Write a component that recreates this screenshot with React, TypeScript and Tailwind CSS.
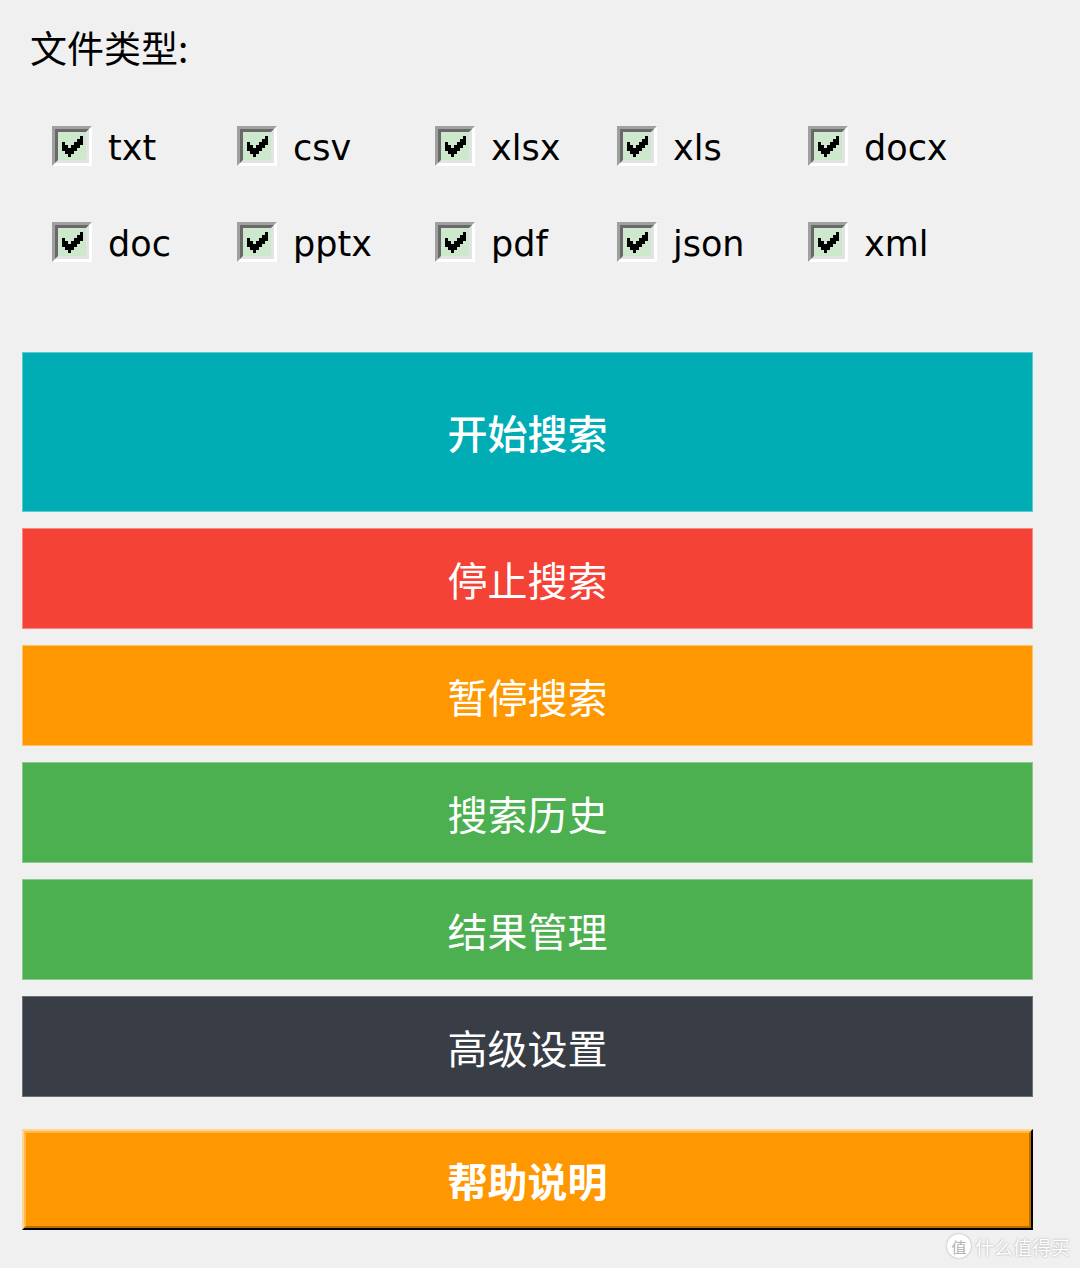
import type { ReactNode } from 'react';

const exts = [
  ['txt', 'csv', 'xlsx', 'xls', 'docx'],
  ['doc', 'pptx', 'pdf', 'json', 'xml'],
];

const cjk = "font-['Noto_Sans_CJK_SC',sans-serif]";

// 7x7 classic tick, scaled up to the box
function Tick() {
  return (
    <svg width="21" height="21" viewBox="0 0 7 7" shapeRendering="crispEdges">
      <path
        fill="#000"
        d="M6 0h1v1H6zM5 1h2v1H5zM0 2h1v1H0zM4 2h3v1H4zM0 3h2v1H0zM3 3h3v1H3zM0 4h5v1H0zM1 5h3v1H1zM2 6h1v1H2z"
      />
    </svg>
  );
}

function CheckItem({ label }: { label: string }) {
  return (
    <label className="flex items-center gap-[16px] h-[40px]">
      <span className="w-[40px] h-[40px] shrink-0 border-[3px] border-t-[#a0a0a0] border-l-[#a0a0a0] border-b-white border-r-white">
        <span className="w-full h-full flex items-center justify-center bg-[#cde8cd] border-[3px] border-t-[#696969] border-l-[#696969] border-b-[#e3e3e3] border-r-[#e3e3e3]">
          <Tick />
        </span>
      </span>
      <span className="font-['DejaVu_Sans',sans-serif] text-[35px] leading-none text-black pt-[5px]">
        {label}
      </span>
    </label>
  );
}

function FlatButton({
  children,
  className,
}: {
  children: ReactNode;
  className: string;
}) {
  return (
    <button
      type="button"
      className={`w-[1011px] flex items-center justify-center text-white text-[40px] leading-none ${cjk} ${className}`}
    >
      {children}
    </button>
  );
}

export default function App() {
  return (
    <div className="relative w-[1080px] h-[1268px] bg-[#f0f0f0] overflow-hidden">
      <div className={`ml-[30px] pt-[29px] h-[66px] text-[37px] leading-[36px] text-black ${cjk}`}>
        文件类型:
      </div>

      <div className="ml-[52px] mt-[60px] grid grid-cols-[185px_198px_182px_191px_auto] gap-y-[56px]">
        {exts.flat().map((e) => (
          <CheckItem key={e} label={e} />
        ))}
      </div>

      <div className="mt-[90px] ml-[22px] flex flex-col gap-[16px]">
        <FlatButton className="h-[160px] bg-[#00adb5] border border-[#5ccbd0] font-medium">
          开始搜索
        </FlatButton>
        <FlatButton className="h-[101px] bg-[#f44336] border border-[#f88880]">停止搜索</FlatButton>
        <FlatButton className="h-[101px] bg-[#ff9800] border border-[#ffc266]">暂停搜索</FlatButton>
        <FlatButton className="h-[101px] bg-[#4caf50] border border-[#8acb8c]">搜索历史</FlatButton>
        <FlatButton className="h-[101px] bg-[#4caf50] border border-[#8acb8c]">结果管理</FlatButton>
        <FlatButton className="h-[101px] bg-[#393e46] border border-[#6b7078]">高级设置</FlatButton>

        {/* raised help button */}
        <div className="mt-[16px] w-[1011px] h-[101px] border-[2px] border-t-[#ffd58f] border-l-[#ffd58f] border-b-black border-r-black">
          <button
            type="button"
            className={`w-full h-full flex items-center justify-center bg-[#ff9800] border-[2px] border-t-[#ffb84d] border-l-[#ffb84d] border-b-[#b86e00] border-r-[#b86e00] text-white text-[40px] leading-none font-bold ${cjk}`}
          >
            帮助说明
          </button>
        </div>
      </div>

      <div className="absolute right-[10px] bottom-[10px] flex items-center gap-[4px] text-white [text-shadow:0_0_2px_#9a9a9a]">
        <span
          className={`w-[24px] h-[24px] rounded-full bg-white shadow-[0_0_2px_#9a9a9a] flex items-center justify-center text-[15px] leading-none text-[#b0b0b0] [text-shadow:none] ${cjk}`}
        >
          值
        </span>
        <span className={`text-[19px] leading-none ${cjk}`}>什么值得买</span>
      </div>
    </div>
  );
}
